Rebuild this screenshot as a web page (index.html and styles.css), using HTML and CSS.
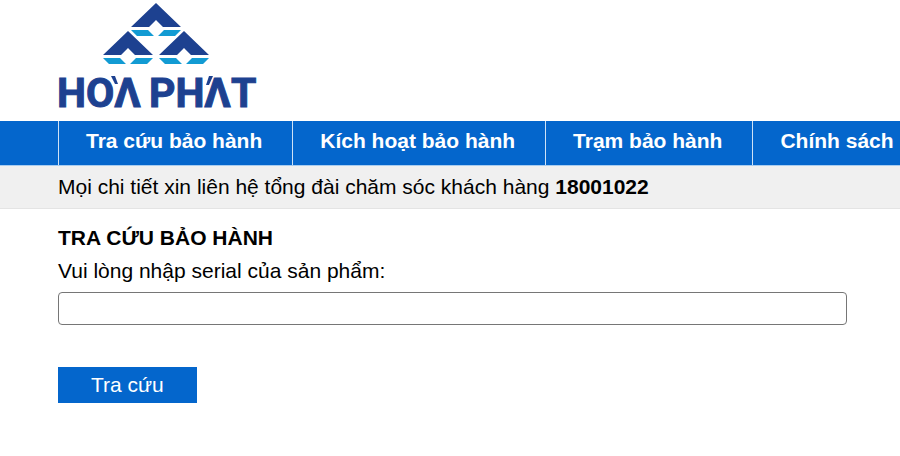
FILE: index.html
```html
<!DOCTYPE html>
<html lang="vi">
<head>
<meta charset="utf-8">
<meta name="viewport" content="width=device-width, initial-scale=1">
<title>Tra cứu bảo hành</title>
<link rel="stylesheet" href="styles.css">
</head>
<body>
<header class="header">
  <a class="logo" href="#" aria-label="HÒA PHÁT">
    <svg width="198" height="108" viewBox="0 0 198 108" aria-hidden="true">
      <defs>
        <g id="peak">
          <path fill="#1d4190" d="M25 0 50 24H32L25 17 18 24H0Z"/>
          <path fill="#129bd3" d="M0 27H17L23 33H6ZM50 27H33L27 33H44Z"/>
        </g>
      </defs>
      <use href="#peak" x="73" y="3"/>
      <use href="#peak" x="45" y="31"/>
      <use href="#peak" x="101" y="31"/>
      <text class="logo-name" x="-1" y="107">HOΛ</text>
      <text class="logo-name" x="91" y="107">PHΛT</text>
      <path fill="#1d4190" d="M53 76H57L60 84H57ZM151 76H155L151 85H148Z"/>
    </svg>
  </a>
</header>
<nav class="nav">
  <ul class="nav-list">
    <li><a href="#">Tra cứu bảo hành</a></li>
    <li><a href="#">Kích hoạt bảo hành</a></li>
    <li><a href="#">Trạm bảo hành</a></li>
    <li><a href="#">Chính sách</a></li>
  </ul>
</nav>
<p class="notice">Mọi chi tiết xin liên hệ tổng đài chăm sóc khách hàng <strong>18001022</strong></p>
<main class="content">
  <h1>TRA CỨU BẢO HÀNH</h1>
  <form class="lookup">
    <label for="serial">Vui lòng nhập serial của sản phẩm:</label>
    <input id="serial" type="text">
    <button type="submit">Tra cứu</button>
  </form>
</main>
</body>
</html>
```
FILE: styles.css
```css
* { box-sizing: border-box; }

body {
  margin: 0;
  background: #fff;
  color: #000;
  font: 21px/24px "Liberation Sans", Arial, sans-serif;
  overflow-x: hidden;
}

.header { padding: 0 58px 12px; }
.logo, .logo svg { display: block; }
.logo { width: 198px; height: 109px; }
.logo svg { overflow: visible; }
.logo-name {
  fill: #1d4190;
  stroke: #1d4190;
  stroke-width: 1px;
  font: bold 41px Roboto, "Liberation Sans", sans-serif;
}

.nav {
  background: #0466cc;
  padding-left: 58px;
  border-bottom: 1px solid #a9cdf0;
}
.nav-list {
  display: flex;
  margin: 0;
  padding: 0;
  list-style: none;
}
.nav-list a {
  display: block;
  padding: 8px 30px 12px 27px;
  border-left: 1px solid #cfe2f6;
  color: #fff;
  font-weight: bold;
  text-decoration: none;
  white-space: nowrap;
}

.notice {
  margin: 0;
  padding: 9px 58px;
  background: #f0f0f0;
  border-bottom: 1px solid #e4e4e4;
}

.content { padding: 17px 53px 0 58px; }
.content h1 {
  margin: 0 0 9px;
  font-size: 21px;
  line-height: 24px;
}
.lookup label { display: block; }
.lookup input {
  display: block;
  width: 100%;
  height: 33px;
  margin: 9px 0 42px;
  padding: 0 8px;
  border: 1px solid #767676;
  border-radius: 4px;
  font: inherit;
}
.lookup button {
  padding: 6px 33px;
  border: 0;
  background: #0466cc;
  color: #fff;
  font: inherit;
}
```
